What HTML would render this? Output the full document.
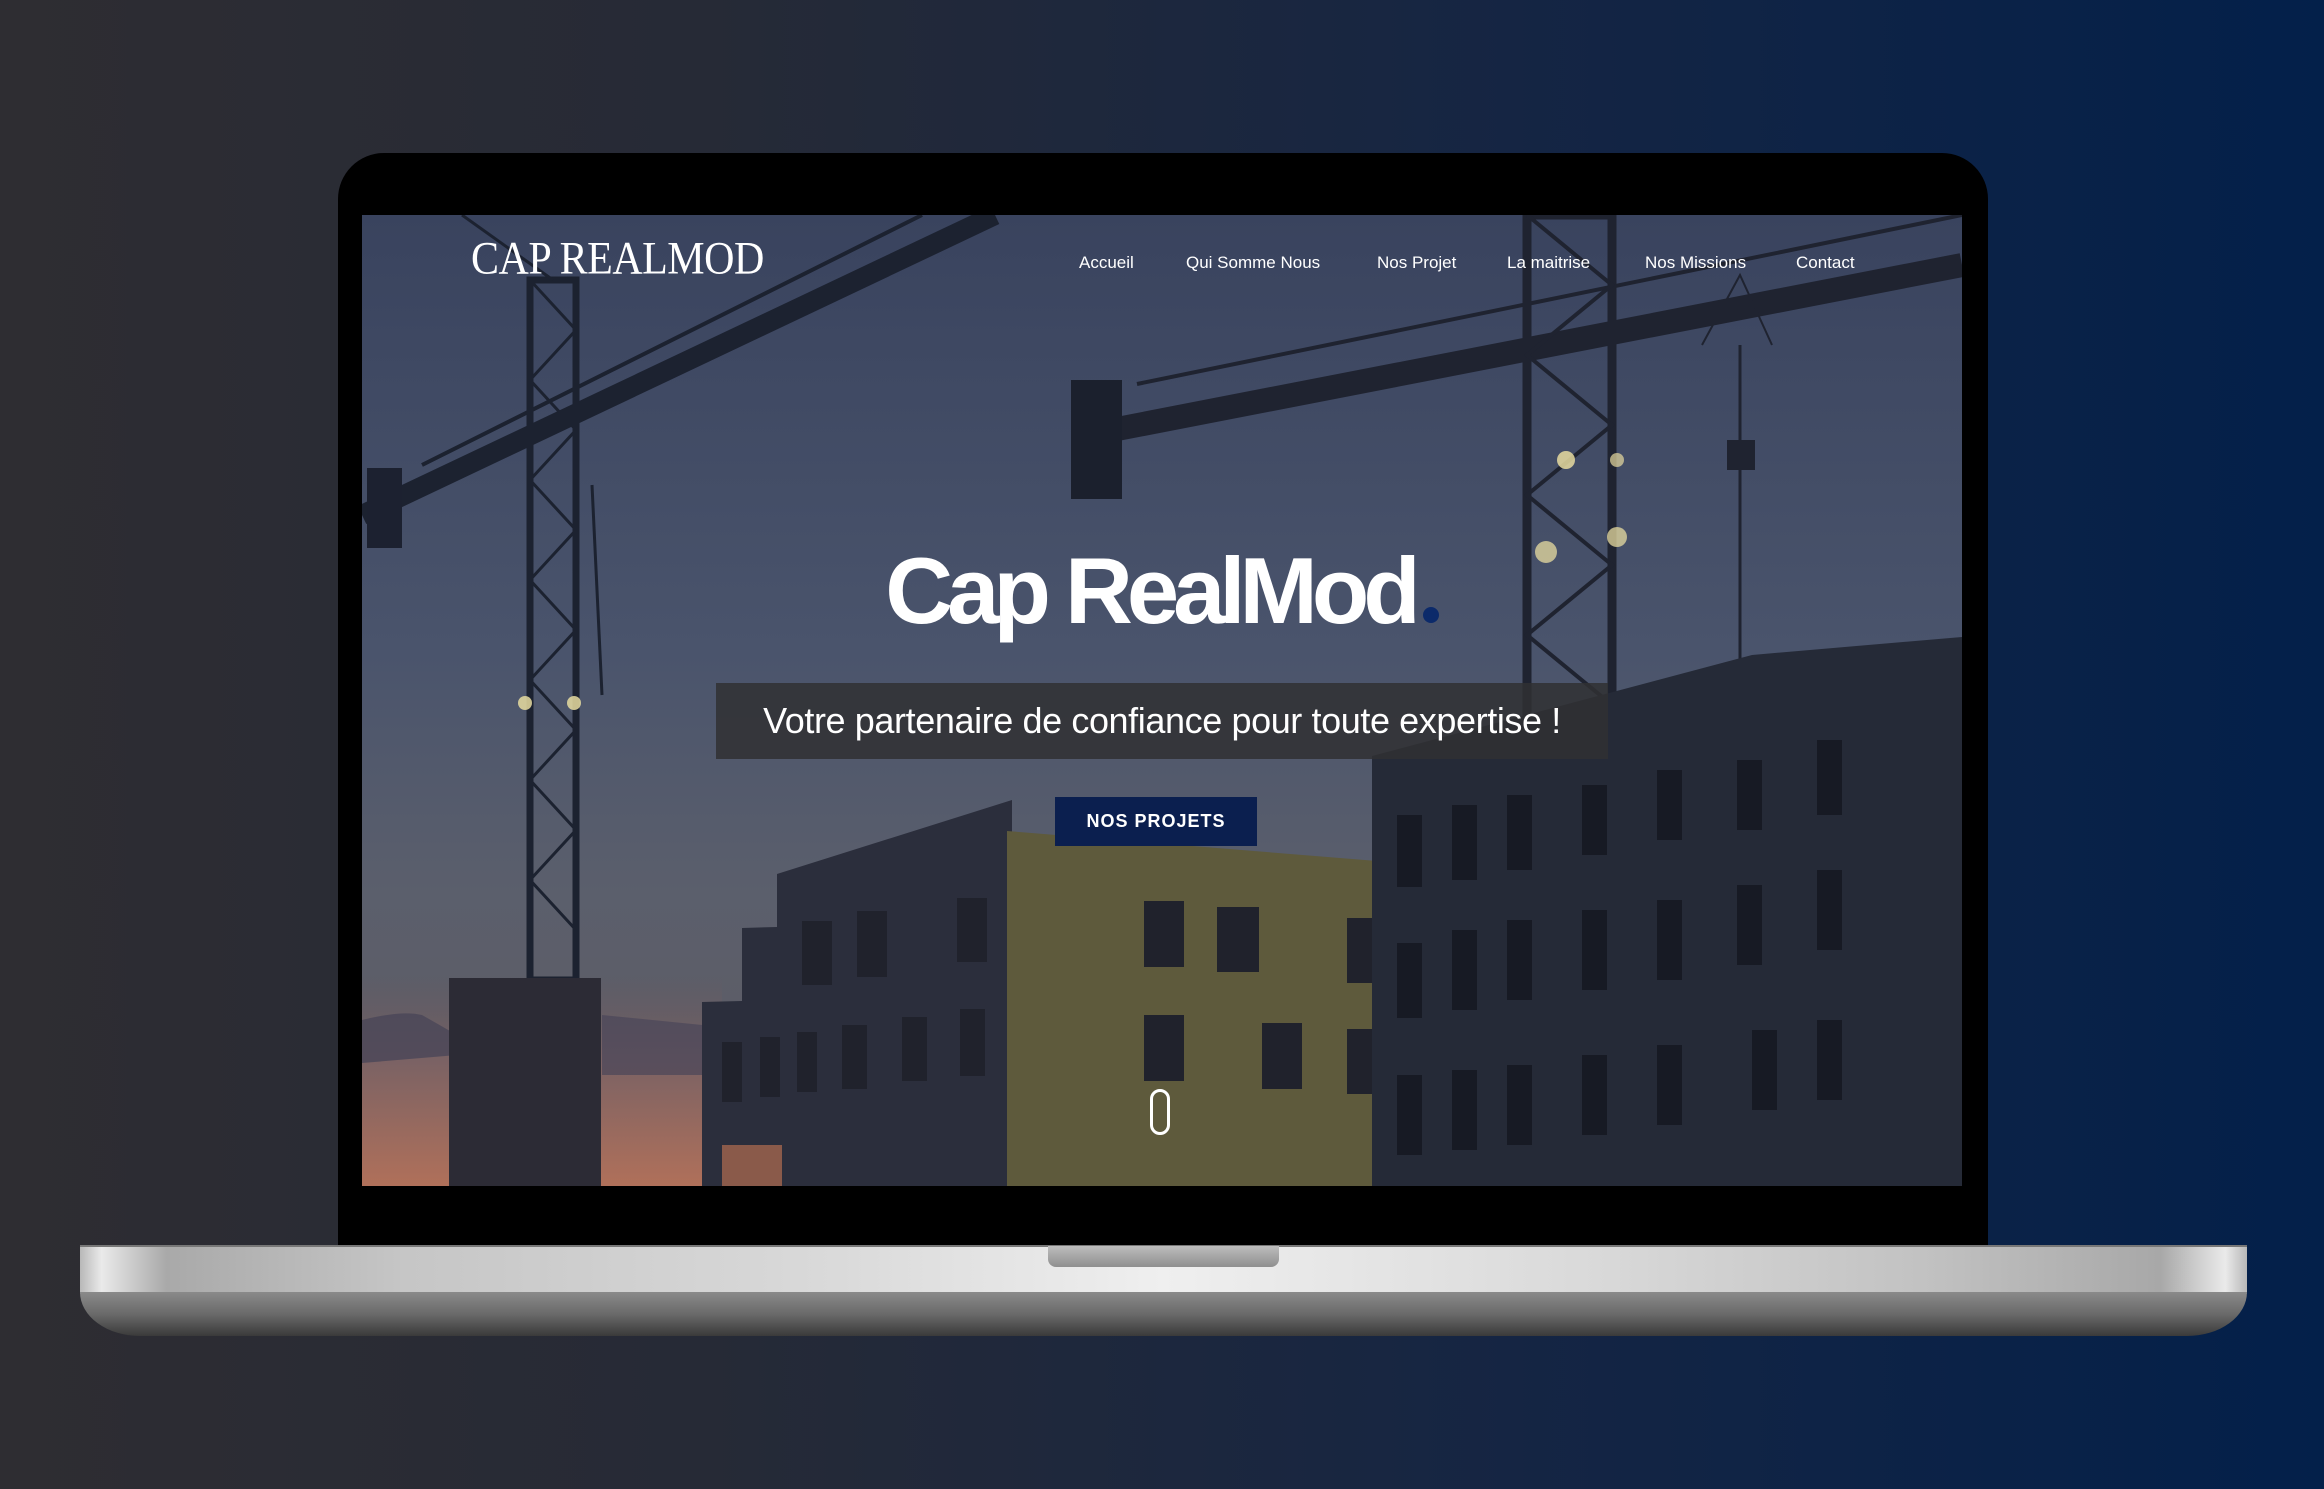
<!DOCTYPE html>
<html><head><meta charset="utf-8">
<style>
html,body{margin:0;padding:0}
body{width:2324px;height:1489px;overflow:hidden;position:relative;background:linear-gradient(90deg,#2e2d32 0%,#262a36 30%,#152543 65%,#03204a 100%);font-family:"Liberation Sans",sans-serif}
.bezel{position:absolute;left:338px;top:153px;width:1650px;height:1100px;background:#000;border-radius:46px 46px 0 0}
.screen{position:absolute;left:362px;top:215px;width:1600px;height:971px;overflow:hidden;background:#3d4762}
.base{position:absolute;left:80px;top:1245px;width:2167px;height:45px;background:linear-gradient(90deg,#b8b8b8 0%,#eaeaea 1%,#a9a9a9 4%,#c6c6c6 15%,#dadada 35%,#efefef 50%,#d9d9d9 70%,#c2c2c2 85%,#a8a8a8 96%,#eaeaea 99%,#b8b8b8 100%);border-top:2px solid #777;border-bottom:2px solid #6f7888}
.base2{position:absolute;left:80px;top:1292px;width:2167px;height:44px;background:linear-gradient(180deg,#8a8a8a,#6a6a6a 50%,#3a3a3a);border-radius:0 0 60px 60px/0 0 44px 44px}
.notch{position:absolute;left:1048px;top:1246px;width:231px;height:21px;background:linear-gradient(180deg,#bdbdbd,#8f8f8f);border-radius:0 0 8px 8px}
.logo{position:absolute;left:109px;top:18px;font-family:"Liberation Serif",serif;color:#fff;font-size:42px;letter-spacing:-0.5px;transform:scaleY(1.1);transform-origin:left top}
.nav{position:absolute;top:38px;color:#fff;font-size:17px}
.title{position:absolute;left:0;width:1600px;top:322px;text-align:center;color:#fff;font-weight:bold;font-size:94px;letter-spacing:-6px}
.dot{display:inline-block;width:16px;height:16px;border-radius:50%;background:#0c2a6a;margin-left:8px;vertical-align:baseline}
.sub{position:absolute;left:354px;top:468px;width:892px;height:76px;background:rgba(48,48,50,.85);color:#fff;font-size:36px;text-align:center;line-height:76px;letter-spacing:-0.4px}
.btn{position:absolute;left:693px;top:582px;width:202px;height:49px;background:#0b1f4f;color:#fff;font-weight:bold;font-size:18px;letter-spacing:1px;text-align:center;line-height:49px}
.mouse{position:absolute;left:788px;top:874px;width:20px;height:46px;border:3px solid #fff;border-radius:12px;box-sizing:border-box}
</style></head><body>
<div class="bezel"></div>
<div class="screen">
<svg width="1600" height="971" viewBox="0 0 1600 971" style="position:absolute;left:0;top:0">
<defs>
<linearGradient id="sky" x1="0" y1="0" x2="0" y2="1">
<stop offset="0" stop-color="#39435e"/><stop offset="0.45" stop-color="#4a546c"/><stop offset="0.7" stop-color="#5b5f6c"/><stop offset="1" stop-color="#5e5a60"/></linearGradient>
<linearGradient id="dusk" x1="0" y1="0" x2="0" y2="1">
<stop offset="0" stop-color="#6a5a60" stop-opacity="0"/><stop offset="0.4" stop-color="#7a6264"/><stop offset="1" stop-color="#b0705a"/></linearGradient>
</defs>
<rect width="1600" height="971" fill="url(#sky)"/>
<rect x="0" y="760" width="360" height="211" fill="url(#dusk)"/>
<path d="M0 805 Q40 795 60 800 L95 820 L95 840 L0 848Z" fill="#4a4658" opacity=".8"/>
<path d="M240 800 L340 810 L340 860 L240 860Z" fill="#4a4658" opacity=".7"/>
<g stroke="#1c2230" fill="none">
<path d="M0 300 L633 0" stroke-width="20"/>
<path d="M60 250 L560 0" stroke-width="4"/>
<rect x="168" y="65" width="46" height="700" stroke-width="7"/>
<path d="M168 65 L214 115 L168 165 L214 215 L168 265 L214 315 L168 365 L214 415 L168 465 L214 515 L168 565 L214 615 L168 665 L214 715" stroke-width="3"/>
<path d="M191 65 L100 0" stroke-width="3"/>
<path d="M230 270 L240 480" stroke-width="3"/>
</g>
<rect x="5" y="253" width="35" height="80" fill="#1c2130"/>
<g stroke="#1f2330" fill="none">
<path d="M714 222 L1600 50" stroke-width="24"/>
<path d="M775 169 L1600 0" stroke-width="4"/>
<rect x="1165" y="0" width="85" height="700" stroke-width="9"/>
<path d="M1165 0 L1250 70 L1165 140 L1250 210 L1165 280 L1250 350 L1165 420 L1250 490 L1165 560 L1250 630" stroke-width="4"/>
<path d="M1378 130 L1378 452" stroke-width="3"/>
<path d="M1340 130 L1378 60 L1410 130" stroke-width="2"/>
</g>
<rect x="709" y="165" width="51" height="119" fill="#1b202d"/>
<rect x="1365" y="225" width="28" height="30" fill="#1f2330"/>
<g fill="#e8dca0">
<circle cx="1204" cy="245" r="9" opacity=".85"/><circle cx="1255" cy="245" r="7" opacity=".7"/>
<circle cx="1255" cy="322" r="10" opacity=".75"/><circle cx="1184" cy="337" r="11" opacity=".75"/>
<circle cx="163" cy="488" r="7" opacity=".85"/><circle cx="212" cy="488" r="7" opacity=".85"/>
</g>
<rect x="87" y="763" width="152" height="208" fill="#2c2b35"/>
<path d="M340 971 L340 787 L380 786 L380 713 L415 712 L415 659 L650 585 L650 971Z" fill="#2b2e3c"/>
<path d="M645 616 L1015 646 L1015 971 L645 971Z" fill="#5e5a3c"/>
<g fill="#20222c">
<rect x="782" y="686" width="40" height="66"/><rect x="855" y="692" width="42" height="65"/><rect x="985" y="703" width="30" height="65"/>
<rect x="782" y="800" width="40" height="66"/><rect x="900" y="808" width="40" height="66"/><rect x="985" y="814" width="30" height="65"/>
<rect x="440" y="706" width="30" height="64"/><rect x="495" y="696" width="30" height="66"/><rect x="595" y="683" width="30" height="64"/>
<rect x="360" y="827" width="20" height="60"/><rect x="398" y="822" width="20" height="60"/><rect x="435" y="817" width="20" height="60"/><rect x="480" y="810" width="25" height="64"/><rect x="540" y="802" width="25" height="64"/><rect x="598" y="794" width="25" height="67"/>
<rect x="360" y="930" width="60" height="41" fill="#8a5a4a"/>
</g>
<path d="M1010 971 L1010 541 L1390 440 L1600 422 L1600 971Z" fill="#252a37"/>
<g fill="#171a24">
<rect x="1035" y="600" width="25" height="72"/><rect x="1090" y="590" width="25" height="75"/><rect x="1145" y="580" width="25" height="75"/><rect x="1220" y="570" width="25" height="70"/><rect x="1295" y="555" width="25" height="70"/><rect x="1375" y="545" width="25" height="70"/><rect x="1455" y="525" width="25" height="75"/>
<rect x="1035" y="728" width="25" height="75"/><rect x="1090" y="715" width="25" height="80"/><rect x="1145" y="705" width="25" height="80"/><rect x="1220" y="695" width="25" height="80"/><rect x="1295" y="685" width="25" height="80"/><rect x="1375" y="670" width="25" height="80"/><rect x="1455" y="655" width="25" height="80"/>
<rect x="1035" y="860" width="25" height="80"/><rect x="1090" y="855" width="25" height="80"/><rect x="1145" y="850" width="25" height="80"/><rect x="1220" y="840" width="25" height="80"/><rect x="1295" y="830" width="25" height="80"/><rect x="1390" y="815" width="25" height="80"/><rect x="1455" y="805" width="25" height="80"/>
</g>
</svg>
<div class="logo">CAP REALMOD</div>
<div class="nav" style="left:717px">Accueil</div>
<div class="nav" style="left:824px">Qui Somme Nous</div>
<div class="nav" style="left:1015px">Nos Projet</div>
<div class="nav" style="left:1145px">La maitrise</div>
<div class="nav" style="left:1283px">Nos Missions</div>
<div class="nav" style="left:1434px">Contact</div>
<div class="title">Cap RealMod<span class="dot"></span></div>
<div class="sub">Votre partenaire de confiance pour toute expertise !</div>
<div class="btn">NOS PROJETS</div>
<div class="mouse"></div>
</div>
<div class="base"></div>
<div class="base2"></div>
<div class="notch"></div>
</body></html>
